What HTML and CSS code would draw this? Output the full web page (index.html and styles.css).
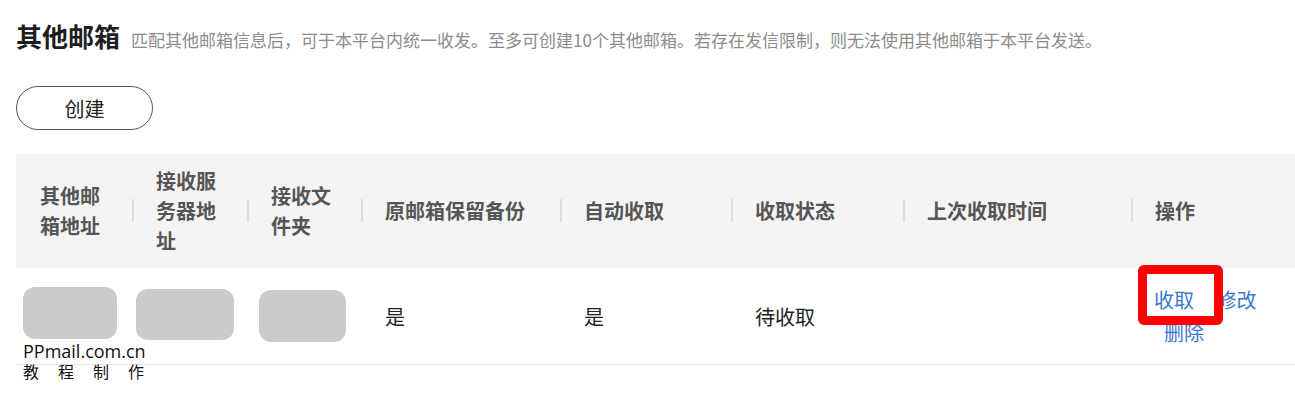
FILE: index.html
```html
<!DOCTYPE html>
<html lang="zh-CN">
<head>
    <meta charset="UTF-8">
    <meta name="viewport" content="width=device-width, initial-scale=1.0">
    <title>其他邮箱</title>
    <link rel="stylesheet" href="styles.css">
</head>
<body>
    <div class="page">
        <div class="page-title">
            <h1>其他邮箱</h1>
            <span class="hint">匹配其他邮箱信息后，可于本平台内统一收发。至多可创建10个其他邮箱。若存在发信限制，则无法使用其他邮箱于本平台发送。</span>
        </div>

        <button class="create-btn">创建</button>

        <div class="mail-table">
            <div class="th">其他邮箱地址</div>
            <div class="th">接收服务器地址</div>
            <div class="th">接收文件夹</div>
            <div class="th">原邮箱保留备份</div>
            <div class="th">自动收取</div>
            <div class="th">收取状态</div>
            <div class="th">上次收取时间</div>
            <div class="th">操作</div>

            <div class="td"><div class="mask mask-a"></div></div>
            <div class="td"><div class="mask mask-b"></div></div>
            <div class="td"><div class="mask mask-c"></div></div>
            <div class="td">是</div>
            <div class="td">是</div>
            <div class="td">待收取</div>
            <div class="td"></div>
            <div class="td actions">
                <div class="actions-line">
                    <a href="#" class="act">收取</a>
                    <a href="#" class="act">修改</a>
                </div>
                <div class="actions-line second">
                    <a href="#" class="act">删除</a>
                </div>
                <span class="mark"></span>
            </div>
        </div>

        <div class="watermark">
            <span class="wm-site">PPmail.com.cn</span>
            <span class="wm-note">教程制作</span>
        </div>
    </div>
</body>
</html>
```

FILE: styles.css
```css
body {
    margin: 0;
    background: #fff;
    font-family: "Noto Sans CJK SC", "Noto Sans", sans-serif;
    color: #222;
}
.page {
    position: relative;
    min-height: 406px;
    padding: 18px 0 0 16px;
    box-sizing: border-box;
}
.page-title {
    display: flex;
    align-items: baseline;
}
.page-title h1 {
    margin: 0;
    font-size: 26px;
    line-height: 36px;
    font-weight: bold;
    color: #1e1e1e;
}
.page-title .hint {
    margin-left: 11px;
    font-size: 17px;
    color: #8c8c8c;
}
.create-btn {
    display: block;
    margin-top: 32px;
    width: 137px;
    height: 44px;
    border: 1px solid #555;
    border-radius: 22px;
    background: #fff;
    font-family: inherit;
    font-size: 20px;
    color: #222;
    padding: 0;
}
.mail-table {
    margin-top: 24px;
    display: grid;
    grid-template-columns: 117px 115px 114px 199px 171px 172px 228px 1fr;
}
.th {
    position: relative;
    display: flex;
    align-items: center;
    min-height: 90px;
    padding: 12px 23px;
    background: #f4f4f4;
    font-size: 20px;
    line-height: 30px;
    font-weight: bold;
    color: #555;
}
.th:first-child {
    padding-left: 24px;
}
.th + .th::before {
    content: "";
    position: absolute;
    left: -1px;
    top: 50%;
    margin-top: -12px;
    width: 2px;
    height: 23px;
    background: #dedede;
}
.td {
    position: relative;
    display: flex;
    align-items: center;
    height: 96px;
    padding: 0 23px;
    border-bottom: 1px solid #e8e8e8;
    font-size: 20px;
    color: #222;
}
.mask {
    flex-shrink: 0;
    background: #cbcbcb;
    border-radius: 12px;
}
.mask-a {
    width: 94px;
    height: 52px;
    margin: -6px 0 0 -16px;
}
.mask-b {
    width: 98px;
    height: 51px;
    margin: -4px 0 0 -20px;
}
.mask-c {
    width: 87px;
    height: 52px;
    margin: 0 0 0 -12px;
}
.actions {
    flex-direction: column;
    align-items: flex-start;
    justify-content: center;
    padding-left: 22px;
}
.actions-line {
    line-height: 33px;
}
.actions-line.second {
    margin-left: 10px;
}
.act {
    color: #3b78cf;
    text-decoration: none;
}
.act + .act {
    margin-left: 18px;
}
.mark {
    position: absolute;
    left: 6px;
    top: -3px;
    width: 67px;
    height: 42px;
    border: 9px solid #ff0000;
    border-radius: 6px;
}
.watermark {
    position: absolute;
    left: 23px;
    top: 341px;
    width: 130px;
    color: #111;
}
.wm-site {
    display: block;
    font-family: "Open Sans", sans-serif;
    font-size: 18px;
    line-height: 21px;
    white-space: nowrap;
}
.wm-note {
    display: block;
    font-family: "Noto Sans CJK SC", sans-serif;
    font-size: 16px;
    line-height: 18px;
    letter-spacing: 19px;
    white-space: nowrap;
}
```
